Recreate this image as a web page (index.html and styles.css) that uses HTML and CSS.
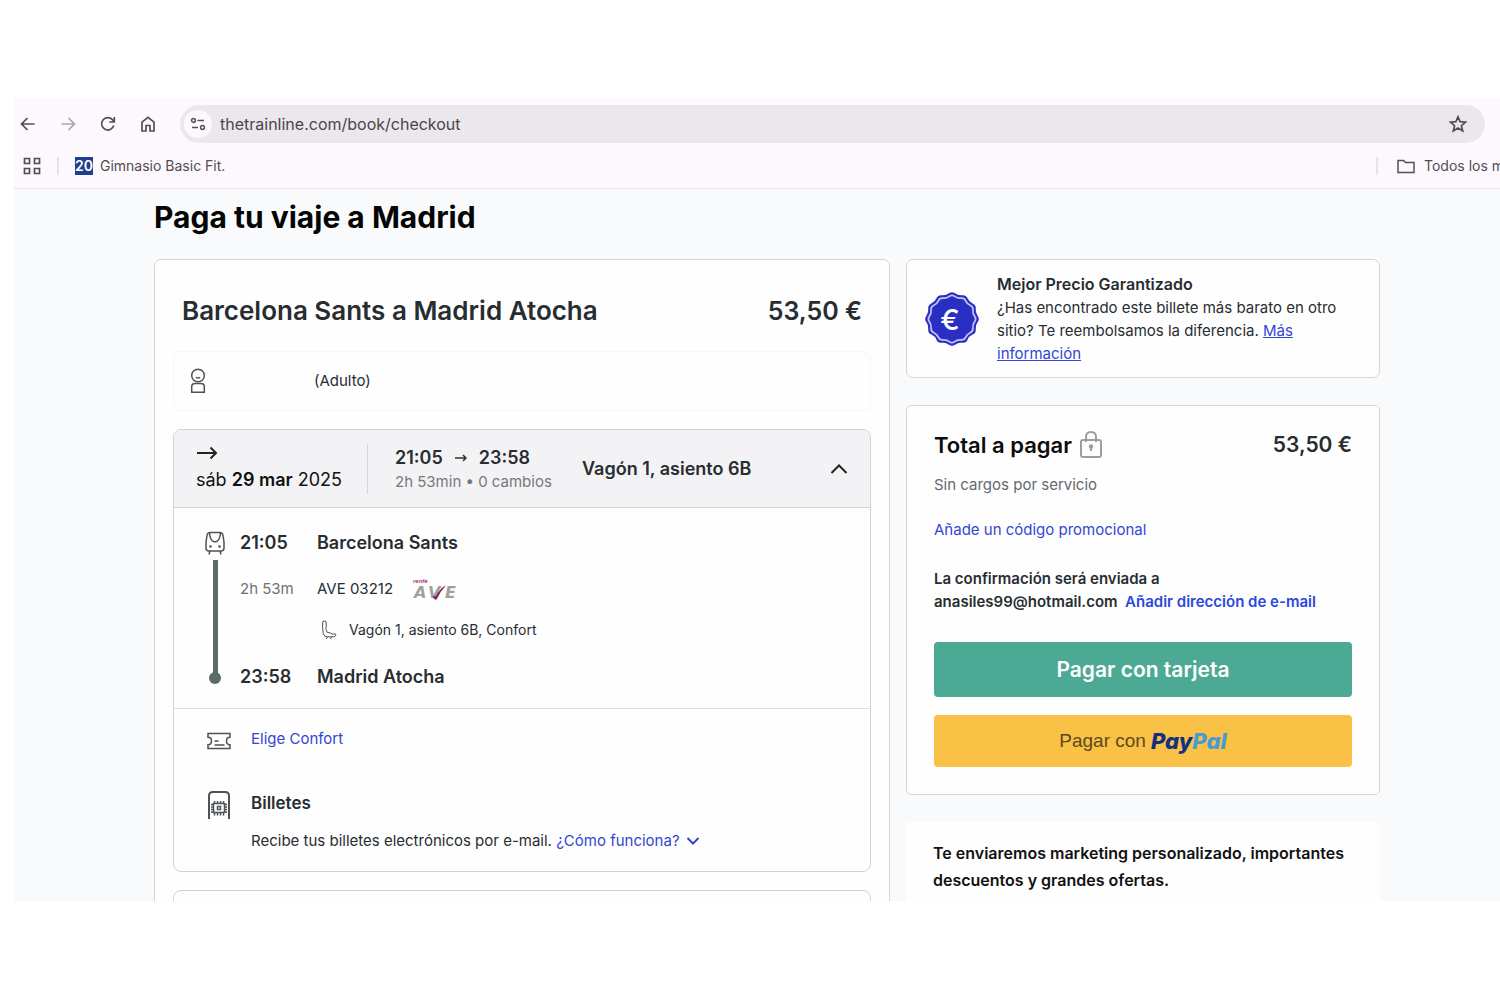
FILE: index.html
```html
<!DOCTYPE html>
<html lang="es">
<head>
    <meta charset="UTF-8">
    <meta name="viewport" content="width=device-width, initial-scale=1.0">
    <title>Paga tu viaje a Madrid</title>
    <link rel="stylesheet" href="styles.css">
</head>
<body>
    <div class="window">
        <header class="browser">
            <div class="toolbar">
                <button class="nav-btn" aria-label="Atrás">
                    <svg width="20" height="20" viewBox="0 0 20 20"><path d="M16.500 10H4M9.500 4L3.500 10l6 6"/></svg>
                </button>
                <button class="nav-btn disabled" aria-label="Adelante">
                    <svg width="20" height="20" viewBox="0 0 20 20"><path d="M3.500 10H16M10.500 4l6 6-6 6"/></svg>
                </button>
                <button class="nav-btn" aria-label="Recargar">
                    <svg width="20" height="20" viewBox="0 0 20 20"><path d="M15.800 11.500A6.200 6.200 0 1 1 14.500 5.700L16 7.500M16.300 3v5h-5"/></svg>
                </button>
                <button class="nav-btn" aria-label="Inicio">
                    <svg width="20" height="20" viewBox="0 0 20 20"><path d="M4 17V8.200l6-4.900 6 4.900V17h-4v-5.500H8V17z"/></svg>
                </button>
                <div class="address">
                    <span class="site-info">
                        <svg width="18" height="18" viewBox="0 0 18 18"><circle cx="4.500" cy="5.500" r="1.900"/><path d="M8.500 5.500H15M3 12.500h6"/><circle cx="13.500" cy="12.500" r="1.900"/></svg>
                    </span>
                    <input type="text" aria-label="Dirección" value="thetrainline.com/book/checkout">
                    <button class="star" aria-label="Guardar en marcadores">
                        <svg width="20" height="20" viewBox="0 0 20 20"><path d="M10 2.800l2.100 4.900 5.400.5-4.100 3.500 1.300 5.300-4.700-2.900L5.300 17l1.300-5.300-4.100-3.500 5.400-.5z"/></svg>
                    </button>
                </div>
            </div>
            <div class="bookmarks">
                <button class="nav-btn" aria-label="Aplicaciones">
                    <svg width="20" height="20" viewBox="0 0 20 20"><path d="M2.500 2.500h5v5h-5zM12.500 2.500h5v5h-5zM2.500 12.500h5v5h-5zM12.500 12.500h5v5h-5z"/></svg>
                </button>
                <span class="divider"></span>
                <a href="#" class="bookmark"><span class="favicon">20</span>Gimnasio Basic Fit.</a>
                <span class="divider last"></span>
                <a href="#" class="bookmark all">
                    <svg width="20" height="18" viewBox="0 0 20 18"><path d="M2 3.500h5.500l2 2H18v10H2z"/></svg>
                    Todos los marcadores
                </a>
            </div>
        </header>

        <main class="page">
            <h1>Paga tu viaje a Madrid</h1>
            <div class="columns">
                <section class="card trip">
                    <div class="trip-title">
                        <h2>Barcelona Sants a Madrid Atocha</h2>
                        <span class="price">53,50 €</span>
                    </div>

                    <div class="passenger">
                        <svg width="16" height="26" viewBox="0 0 16 26"><circle cx="8" cy="7.500" r="6.300"/><path d="M5.800 9.300q2.200 1.300 4.400 0M1.700 24.300v-5.500q0-3.300 3.300-3.300h6q3.300 0 3.300 3.300v5.500z"/></svg>
                        <span>(Adulto)</span>
                    </div>

                    <article class="journey">
                        <header class="journey-head">
                            <div class="date">
                                <svg width="22" height="16" viewBox="0 0 22 16"><path d="M1 8h19M14.500 2.500L20 8l-5.500 5.500"/></svg>
                                <p>sáb <b>29 mar</b> 2025</p>
                            </div>
                            <div class="times">
                                <p class="hours">21:05
                                    <svg width="12" height="10" viewBox="0 0 12 10"><path d="M0 5h11M8 2l3 3-3 3"/></svg>
                                    23:58</p>
                                <p class="duration">2h 53min • 0 cambios</p>
                            </div>
                            <strong class="seat">Vagón 1, asiento 6B</strong>
                            <button class="toggle" aria-label="Ocultar detalles">
                                <svg width="18" height="12" viewBox="0 0 18 12"><path d="M1.500 10L9 2.500l7.500 7.500"/></svg>
                            </button>
                        </header>

                        <div class="itinerary">
                            <div class="rail">
                                <svg width="20" height="24" viewBox="0 0 20 24">
                                    <path d="M5 1.500h10q2.500 0 3 3l1 6.500v6q0 3-3 3H4q-3 0-3-3v-6L2 4.500q.5-3 3-3zM4.500 2q.5 7 4 8.500 1.500.6 3 0 3.500-1.500 4-8.500M5 20l-1 3.500M15 20l1 3.500"/>
                                    <circle cx="5.500" cy="15.500" r=".6"/><circle cx="14.500" cy="15.500" r=".6"/>
                                </svg>
                                <span class="line"></span>
                                <span class="dot"></span>
                            </div>
                            <strong>21:05</strong>
                            <strong>Barcelona Sants</strong>
                            <span class="muted">2h 53m</span>
                            <span class="train">AVE 03212
                                <svg class="ave" width="50" height="24" viewBox="0 0 50 24" aria-label="renfe AVE">
                                    <text class="renfe" x="0" y="6">renfe</text>
                                    <text class="letters" x="1" y="21">A</text>
                                    <text class="letters" x="15" y="21">V</text>
                                    <path class="flash" d="M19.500 19.500q2.500-1 3.200-.2Q27 11 33 8.500q-6 6-9.500 14.300-3-.5-4-3.300z"/>
                                    <text class="letters" x="32" y="21">E</text>
                                </svg>
                            </span>
                            <span class="seat-row">
                                <svg width="16" height="20" viewBox="0 0 16 20"><path d="M1.800 1.500q1.700-1 3.200 0 .8 5-.2 7l1.500 4 3 .3q.5 1.200 2 1.200h2.800q1 0 .7 1.200-.6 1.600-2.300 1.600H6.500q-3.500 0-4.200-3Q1 7 1.800 1.500zM6.500 17l-1.200 2M10.500 17l-1 2"/></svg>
                                Vagón 1, asiento 6B, Confort
                            </span>
                            <strong>23:58</strong>
                            <strong>Madrid Atocha</strong>
                        </div>

                        <div class="extras">
                            <div class="extra">
                                <svg width="24" height="18" viewBox="0 0 24 18"><path d="M1 1.500h22v3.800q-3.500 0-3.500 3.700t3.500 3.700v3.800H1v-3.800q3.500 0 3.500-3.700T1 5.300zM7.500 9h4M7.500 13h10"/></svg>
                                <a href="#">Elige Confort</a>
                            </div>
                            <div class="extra tickets">
                                <svg width="24" height="28" viewBox="0 0 24 28">
                                    <path class="frame" d="M2 28V5q0-4 4-4h12q4 0 4 4v23"/>
                                    <path class="chip" d="M6.500 12.500h11v9h-11zM10.500 15.500h3v3h-3zM4 13.500h2M4 16h2M4 18.500h2M4 21h2M18 13.500h2M18 16h2M18 18.500h2M18 21h2M7.500 10v2M10.500 10v2M13.500 10v2M16.500 10v2M7.500 22v2.500M10.500 22v2.500M13.500 22v2.500M16.500 22v2.500"/>
                                </svg>
                                <div>
                                    <h3>Billetes</h3>
                                    <p>Recibe tus billetes electrónicos por e-mail.
                                        <a href="#">¿Cómo funciona? <svg width="14" height="10" viewBox="0 0 14 10"><path d="M1.500 2L7 7.500 12.500 2"/></svg></a>
                                    </p>
                                </div>
                            </div>
                        </div>
                    </article>

                    <article class="journey next"></article>
                </section>

                <aside class="side">
                    <section class="card guarantee">
                        <svg class="badge" width="56" height="56" viewBox="-29 -29 58 58">
                            <path id="seal" d="M26.600-3.200Q29 0 26.600 3.200 24.100 6.500 24.600 10.500 25.100 14.500 21.400 16.100 17.700 17.700 16.100 21.400 14.500 25.100 10.500 24.600 6.500 24.100 3.200 26.600 0 29-3.200 26.600-6.500 24.100-10.500 24.600-14.500 25.100-16.100 21.400-17.700 17.700-21.400 16.100-25.100 14.500-24.600 10.500-24.100 6.500-26.600 3.200-29 0-26.600-3.200-24.100-6.500-24.600-10.500-25.100-14.500-21.400-16.100-17.700-17.700-16.100-21.400-14.500-25.100-10.500-24.600-6.500-24.100-3.200-26.600 0-29 3.200-26.600 6.500-24.100 10.500-24.600 14.500-25.100 16.100-21.400 17.700-17.700 21.400-16.100 25.100-14.500 24.600-10.500 24.100-6.500 26.600-3.200z"/>
                            <use class="ring" href="#seal" transform="scale(.88)"/>
                            <text x="-2" y="11">€</text>
                        </svg>
                        <p><b>Mejor Precio Garantizado</b><br>
                            ¿Has encontrado este billete más barato en otro sitio? Te reembolsamos la diferencia. <a href="#">Más información</a></p>
                    </section>

                    <section class="card payment">
                        <div class="total">
                            <h2>Total a pagar</h2>
                            <svg width="22" height="28" viewBox="0 0 22 28"><path d="M6 11V6q0-5 5-5t5 5v5"/><rect x="1" y="9" width="20" height="17" rx="2"/><path class="key" d="M11 15v5"/><circle cx="11" cy="15.500" r="1.200"/></svg>
                            <span class="price">53,50 €</span>
                        </div>
                        <p class="fees">Sin cargos por servicio</p>
                        <a href="#" class="promo">Añade un código promocional</a>
                        <p class="confirm">La confirmación será enviada a<br>
                            anasiles99@hotmail.com&nbsp; <a href="#">Añadir dirección de e-mail</a></p>
                        <button class="pay">Pagar con tarjeta</button>
                        <button class="pay paypal">Pagar con <em>Pay<span>Pal</span></em></button>
                    </section>

                    <section class="marketing">
                        <p>Te enviaremos marketing personalizado, importantes descuentos y grandes ofertas.</p>
                    </section>
                </aside>
            </div>
        </main>
    </div>
</body>
</html>
```
FILE: styles.css
```css
* {
    box-sizing: border-box;
}

body {
    margin: 0;
    height: 100vh;
    padding: 98px 0 99px 14px;
    background: #fff;
    color: #272d31;
    font-family: Inter, "Liberation Sans", sans-serif;
    font-size: 15px;
    line-height: 24px;
    overflow: hidden;
}

h1, h2, h3, p {
    margin: 0;
}

button {
    border: 0;
    padding: 0;
    background: none;
    font-family: inherit;
    cursor: pointer;
}

a {
    color: #3346d3;
    text-decoration: none;
}

svg {
    display: block;
    flex: none;
    fill: none;
    stroke: #4c5255;
    stroke-width: 1.5;
}

strong, b {
    font-weight: 600;
}

.window {
    height: 100%;
    display: flex;
    flex-direction: column;
    overflow: hidden;
}

/* browser bars */
.browser {
    flex: none;
    background: #fdf8fe;
    border-bottom: 1px solid #e6e3ea;
}

.toolbar {
    display: flex;
    align-items: center;
    gap: 20px;
    padding: 7px 15px 0 4px;
}

.nav-btn svg, .star svg {
    stroke: #504e55;
    stroke-width: 1.7;
}

.nav-btn.disabled svg {
    stroke: #a9a6ad;
}

.address {
    flex: 1;
    display: flex;
    align-items: center;
    gap: 8px;
    height: 38px;
    padding: 0 17px 0 4px;
    margin-left: 2px;
    border-radius: 19px;
    background: #ece7ed;
}

.site-info {
    display: grid;
    place-items: center;
    width: 28px;
    height: 28px;
    border-radius: 50%;
    background: #fdf8fe;
}

.address input {
    flex: 1;
    border: 0;
    padding: 0;
    background: none;
    color: #48454c;
    font-family: inherit;
    font-size: 16px;
}

.bookmarks {
    display: flex;
    align-items: center;
    height: 45px;
    padding-left: 8px;
    white-space: nowrap;
    overflow: hidden;
}

.divider {
    width: 2px;
    height: 18px;
    margin: 0 16px 0 15px;
    background: #e8e1ee;
}

.divider.last {
    margin: 0 18px 0 auto;
}

.bookmark {
    display: flex;
    align-items: center;
    gap: 7px;
    color: #504e54;
    font-size: 14px;
}

.bookmark.all {
    width: 104px;
    gap: 8px;
}

.favicon {
    width: 18px;
    background: #1f3f8f;
    color: #fff;
    font-weight: 600;
    line-height: 18px;
    text-align: center;
}

/* checkout page */
.page {
    flex: 1;
    min-height: 0;
    padding: 8px 120px 0 140px;
    background: #f9fafc;
    overflow: hidden;
}

h1 {
    margin-bottom: 22px;
    color: #050505;
    font-size: 30px;
    font-weight: 700;
    line-height: 40px;
}

.columns {
    display: grid;
    grid-template-columns: 736fr 474fr;
    gap: 16px;
    align-items: start;
}

.card {
    background: #fefefe;
    border: 1px solid #d3d6d8;
    border-radius: 7px;
}

.trip {
    padding: 0 18px;
}

.trip-title {
    display: flex;
    justify-content: space-between;
    padding: 35px 9px 24px;
    font-size: 25px;
    line-height: 32px;
}

.trip-title h2 {
    font-size: 26px;
    font-weight: 600;
}

.price {
    font-weight: 600;
}

.passenger {
    display: flex;
    align-items: center;
    gap: 108px;
    height: 60px;
    margin-bottom: 18px;
    padding: 0 16px;
    border: 1px solid #f5f6f7;
    border-radius: 8px;
}

.journey {
    border: 1px solid #d0d3d5;
    border-radius: 8px;
    overflow: hidden;
}

.journey.next {
    height: 200px;
    margin-top: 18px;
}

.journey-head {
    display: flex;
    align-items: center;
    height: 78px;
    padding: 0 22px;
    background: #f3f3f5;
    border-bottom: 1px solid #d0d3d5;
}

.date {
    width: 172px;
    height: 50px;
    padding-top: 1px;
    border-right: 1px solid #d5d7d9;
    color: #111;
    font-size: 18px;
}

.date svg {
    margin-bottom: 7px;
    stroke: #222;
    stroke-width: 2;
}

.times {
    width: 187px;
    padding: 2px 0 0 27px;
}

.hours {
    display: flex;
    align-items: center;
    gap: 12px;
    font-size: 18px;
    font-weight: 600;
}

.hours svg {
    stroke: #333;
}

.duration {
    color: #75797c;
    font-size: 15px;
    white-space: nowrap;
}

.seat {
    margin-left: 27px;
    font-size: 18px;
}

.toggle {
    margin-left: auto;
}

.toggle svg {
    stroke: #222;
    stroke-width: 2;
}

.itinerary {
    display: grid;
    grid-template-columns: 35px 77px 1fr;
    grid-template-rows: 46px 41px 47px 24px;
    padding: 23px 31px 19px;
    border-bottom: 1px solid #dcdedf;
}

.itinerary strong {
    font-size: 18px;
}

.rail {
    grid-row: 1 / 5;
    display: flex;
    flex-direction: column;
    align-items: center;
    width: 20px;
    padding-bottom: 5px;
}

.rail .line {
    flex: 1;
    width: 5px;
    margin-top: 5px;
    background: #5c6b66;
}

.rail .dot {
    width: 12px;
    height: 12px;
    margin-top: -4px;
    border-radius: 50%;
    background: #5c6b66;
}

.muted {
    color: #6d7275;
}

.train, .seat-row {
    display: flex;
    align-items: center;
    height: 24px;
}

.train {
    gap: 20px;
}

.seat-row {
    grid-column: 3;
    gap: 12px;
    padding-left: 4px;
    font-size: 14px;
}

.seat-row svg {
    stroke-width: 1;
}

.ave text {
    stroke: none;
}

.ave .letters {
    fill: #9da19f;
    font: oblique bold 16px "DejaVu Sans", sans-serif;
}

.ave .renfe {
    fill: #9b3878;
    font: italic bold 6px "Liberation Sans", sans-serif;
}

.ave .flash {
    fill: #8a2362;
    stroke: none;
}

.extras {
    padding: 18px 33px;
}

.extra {
    display: flex;
    gap: 20px;
    margin-bottom: 40px;
}

.extra > svg {
    margin-top: 5px;
}

.tickets {
    margin-bottom: 0;
}

.tickets > svg {
    margin-top: 0;
}

.frame {
    stroke-width: 2;
}

.tickets h3 {
    margin-bottom: 14px;
    font-size: 17px;
    font-weight: 600;
}

.tickets p a svg {
    display: inline-block;
    margin-left: 2px;
    stroke: #3346d3;
    stroke-width: 2;
}

/* right column */
.guarantee {
    display: flex;
    align-items: center;
    gap: 17px;
    margin-bottom: 27px;
    padding: 13px 18px 12px 17px;
}

.guarantee p {
    line-height: 23px;
}

.guarantee b {
    font-size: 16px;
}

.guarantee a {
    text-decoration: underline;
}

.badge {
    fill: #2a2fc4;
    stroke: none;
}

.badge .ring {
    fill: none;
    stroke: #c3c3f5;
    stroke-width: 2;
}

.badge text {
    fill: #fff;
    font-size: 30px;
    font-weight: 500;
    text-anchor: middle;
}

.payment {
    margin-bottom: 27px;
    padding: 23px 27px 27px;
    border-radius: 5px;
}

.total {
    display: flex;
    align-items: center;
    gap: 8px;
    margin-bottom: 12px;
    font-size: 21px;
    line-height: 32px;
}

.total h2 {
    color: #0c0c0c;
    font-size: 22px;
    font-weight: 600;
}

.total svg {
    stroke: #9a9fa1;
    stroke-width: 2;
}

.total .price {
    margin-left: auto;
}

.fees {
    margin-bottom: 21px;
    color: #65696c;
}

.promo {
    display: block;
    margin-bottom: 25px;
}

.confirm {
    margin-bottom: 29px;
    font-weight: 600;
    line-height: 23px;
}

.confirm a {
    color: #2a49dc;
}

.pay {
    display: block;
    width: 100%;
    height: 55px;
    border-radius: 4px;
    background: #4ca993;
    color: #fff;
    font-size: 21px;
    font-weight: 600;
}

.paypal {
    display: flex;
    align-items: center;
    justify-content: center;
    gap: 5px;
    height: 52px;
    margin-top: 18px;
    background: #f9c146;
    color: #5b4a1e;
    font-family: "Liberation Sans", sans-serif;
    font-size: 19px;
    font-weight: 400;
}

.paypal em {
    color: #14307f;
    font-family: Inter, sans-serif;
    font-size: 22px;
    font-weight: 800;
}

.paypal em span {
    color: #4a9bd2;
}

.marketing {
    padding: 18px 27px 40px;
    background: #fefefe;
    color: #111;
    font-size: 16px;
    font-weight: 600;
    line-height: 27px;
}
```
